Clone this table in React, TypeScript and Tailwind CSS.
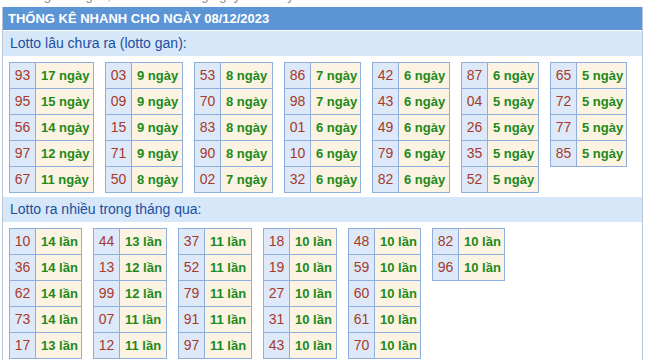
import React from "react";

type Row = [string, string];

// value-column width of each table, read off the reference
const ganTables: { w: string; rows: Row[] }[] = [
  { w: "w-[58px]", rows: [["93", "17 ngày"], ["95", "15 ngày"], ["56", "14 ngày"], ["97", "12 ngày"], ["67", "11 ngày"]] },
  { w: "w-[51px]", rows: [["03", "9 ngày"], ["09", "9 ngày"], ["15", "9 ngày"], ["71", "9 ngày"], ["50", "8 ngày"]] },
  { w: "w-[52px]", rows: [["53", "8 ngày"], ["70", "8 ngày"], ["83", "8 ngày"], ["90", "8 ngày"], ["02", "7 ngày"]] },
  { w: "w-[50px]", rows: [["86", "7 ngày"], ["98", "7 ngày"], ["01", "6 ngày"], ["10", "6 ngày"], ["32", "6 ngày"]] },
  { w: "w-[51px]", rows: [["42", "6 ngày"], ["43", "6 ngày"], ["49", "6 ngày"], ["79", "6 ngày"], ["82", "6 ngày"]] },
  { w: "w-[51px]", rows: [["87", "6 ngày"], ["04", "5 ngày"], ["26", "5 ngày"], ["35", "5 ngày"], ["52", "5 ngày"]] },
  { w: "w-[50px]", rows: [["65", "5 ngày"], ["72", "5 ngày"], ["77", "5 ngày"], ["85", "5 ngày"]] },
];

const hotTables: { w: string; rows: Row[] }[] = [
  { w: "w-[46px]", rows: [["10", "14 lần"], ["36", "14 lần"], ["62", "14 lần"], ["73", "14 lần"], ["17", "13 lần"]] },
  { w: "w-[47px]", rows: [["44", "13 lần"], ["13", "12 lần"], ["99", "12 lần"], ["07", "11 lần"], ["12", "11 lần"]] },
  { w: "w-[47px]", rows: [["37", "11 lần"], ["52", "11 lần"], ["79", "11 lần"], ["91", "11 lần"], ["97", "11 lần"]] },
  { w: "w-[47px]", rows: [["18", "10 lần"], ["19", "10 lần"], ["27", "10 lần"], ["31", "10 lần"], ["43", "10 lần"]] },
  { w: "w-[46px]", rows: [["48", "10 lần"], ["59", "10 lần"], ["60", "10 lần"], ["61", "10 lần"], ["70", "10 lần"]] },
  { w: "w-[46px]", rows: [["82", "10 lần"], ["96", "10 lần"]] },
];

function StatTable({ rows, w }: { rows: Row[]; w: string }) {
  return (
    <div className="border-t border-l border-[#8eaedc] self-start">
      {rows.map(([num, val]) => (
        <div key={num} className="flex h-[26px]">
          <div className="w-[26px] shrink-0 flex items-center justify-center bg-[#dde9f8] border-r border-b border-[#8eaedc] text-[14px] text-[#a63a2c]">
            {num}
          </div>
          <div
            className={`${w} shrink-0 flex items-center pl-[5px] bg-[#fdf3e2] border-r border-b border-[#8eaedc] text-[13px] font-bold text-[#1b8a1b] whitespace-nowrap`}
          >
            {val}
          </div>
        </div>
      ))}
    </div>
  );
}

function SubHeader({ children }: { children: React.ReactNode }) {
  return (
    <div className="h-[25px] bg-[#d6e7f9] flex items-center pl-[7px] text-[14px] text-[#1d4f9e]">
      {children}
    </div>
  );
}

export default function App() {
  return (
    <div
      className="w-[647px] h-[360px] overflow-hidden bg-white"
      style={{ fontFamily: '"Liberation Sans", Arial, sans-serif' }}
    >
      {/* line above the box, scrolled mostly out of view */}
      <div className="h-[6px] overflow-hidden pl-[14px]">
        <div className="-mt-[12px] text-[13px] leading-[16px] text-[#8a8a8a] whitespace-nowrap">
          Thống kê lô gan, lô ra nhiều trong ngày hôm nay
        </div>
      </div>

      <div className="ml-[2px] w-[641px] border-l border-r border-[#b9c6da] h-[354px] mt-[1px]">
        <div className="h-[23px] bg-[#5c95d5] flex items-center pl-[5px] text-[13px] font-bold text-white">
          THỐNG KÊ NHANH CHO NGÀY 08/12/2023
        </div>
        <div className="h-[1px]" />
        <SubHeader>Lotto lâu chưa ra (lotto gan):</SubHeader>

        <div className="flex gap-[11px] pl-[6px] pt-[6px] pb-[4px]">
          {ganTables.map((t, i) => (
            <StatTable key={i} rows={t.rows} w={t.w} />
          ))}
        </div>

        <SubHeader>Lotto ra nhiều trong tháng qua:</SubHeader>

        <div className="flex gap-[11px] pl-[6px] pt-[6px]">
          {hotTables.map((t, i) => (
            <StatTable key={i} rows={t.rows} w={t.w} />
          ))}
        </div>
      </div>
    </div>
  );
}
